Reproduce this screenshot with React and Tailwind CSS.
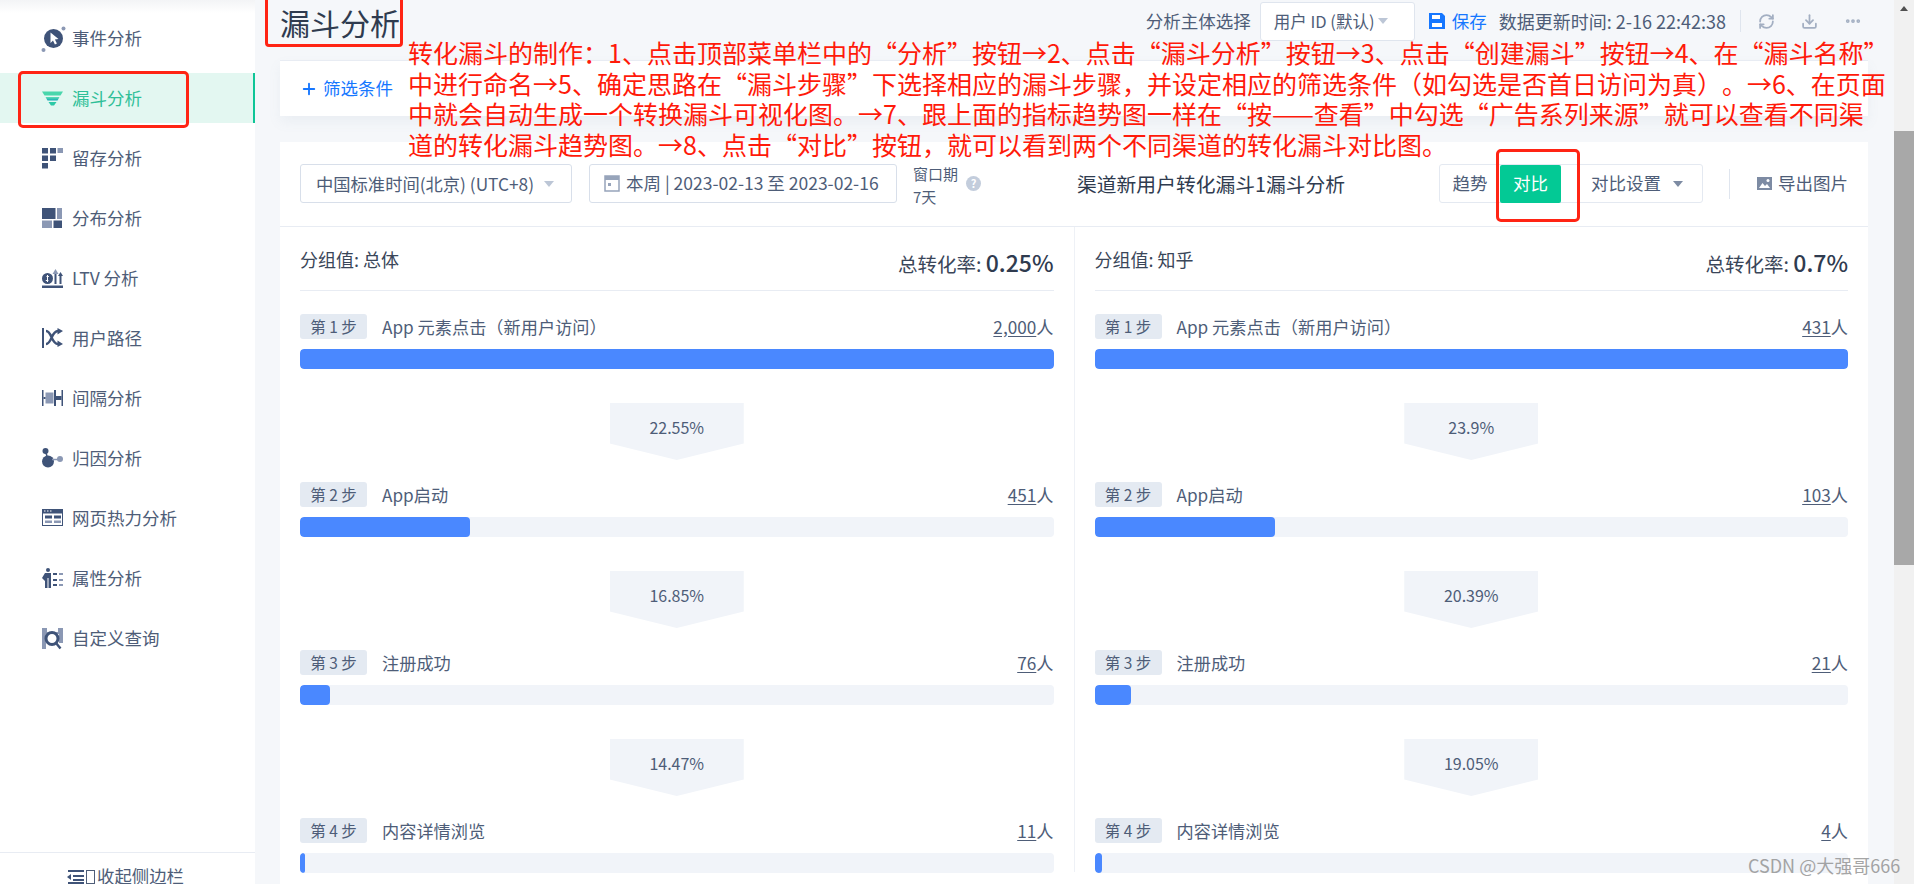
import { Plus, RefreshCw, Download, MoreHorizontal } from "lucide-react";

const DARK = "#3f5378";
const LIGHT = "#8b98b4";

// sidebar glyphs, all on a 21x21 box
const icons = {
  event: (
    <>
      <circle cx="11.500" cy="10.500" r="9.500" fill={DARK} />
      <path d="M8.500 4.500l8 6.500-3.600.6 2 4-2 .9-1.900-4-2.500 2.500z" fill="#fff" />
      <circle cx="21.500" cy="0.500" r="2" fill={LIGHT} />
      <circle cx="1.500" cy="22" r="2" fill={LIGHT} />
    </>
  ),
  funnel: (
    <>
      <defs>
        <linearGradient id="fn" x1="0" y1="0" x2="0" y2="1">
          <stop offset="0" stopColor="#5fe0b4" />
          <stop offset="1" stopColor="#14a8b4" />
        </linearGradient>
      </defs>
      <path d="M0 3.500h21l-2.500 4h-16z" fill="#49d6ac" />
      <path d="M3.500 9h14l-2 3.500h-10z" fill="url(#fn)" />
      <path d="M6.500 14h8l-2.500 3.500h-3z" fill="#2cc9a6" />
    </>
  ),
  retention: (
    <>
      <path d="M0 0h6v5.500H0zM8 0h6v5.500H8zM0 7.500h6V13H0zM8 7.500h6V13H8zM0 15h6v5.500H0z" fill={DARK} />
      <path d="M15.500 0h5.500v5h-5.500z" fill={LIGHT} />
    </>
  ),
  dist: (
    <>
      <path d="M0 0h13.500v11H0zM11.500 12.500H20V20h-8.500z" fill={DARK} />
      <path d="M15 0h5v11h-5zM0 12.500h10V20H0z" fill={LIGHT} />
    </>
  ),
  ltv: (
    <>
      <circle cx="5.500" cy="10.500" r="5.500" fill={DARK} />
      <path d="M5.500 7v7M3.800 12.500h2.600M4.500 8.500h2.400" stroke="#fff" strokeWidth="1" />
      <path d="M0 17.500h21V20H0z" fill={DARK} />
      <path d="M12.500 6h2v10h-2z" fill={DARK} />
      <path d="M17.500 8h2v8h-2z" fill={DARK} />
      <path d="M13.500 1l3 5h-6z" fill={LIGHT} />
      <path d="M18.500 4l2.500 4h-5z" fill={DARK} />
    </>
  ),
  path: (
    <>
      <path d="M0 0h2v20H0z" fill={DARK} />
      <path d="M4 3c6 0 5 13 12 13M4 16c6 0 5-13 12-13" stroke={DARK} strokeWidth="2.500" fill="none" />
      <path d="M15.500 0l5.500 3-5.500 3.500zM15.500 12.500l5.500 3.500-5.500 3z" fill={DARK} />
    </>
  ),
  interval: (
    <>
      <path d="M0 2h1.500v16H0zM19.500 2H21v16h-1.500zM12 2h2v16h-2z" fill={DARK} />
      <path d="M3.500 4.500h8v11h-8z" fill={LIGHT} />
      <path d="M1.500 9h2v2h-2zM14 8h5.500v4H14z" fill={DARK} />
    </>
  ),
  attr: (
    <>
      <circle cx="3.500" cy="3" r="3" fill={DARK} />
      <path d="M3.500 3l2.500 9" stroke={DARK} strokeWidth="1.500" />
      <circle cx="6" cy="13.500" r="6" fill={DARK} />
      <circle cx="18" cy="11" r="3" fill={LIGHT} />
      <path d="M10 11.500h6" stroke={LIGHT} strokeWidth="1.500" />
    </>
  ),
  heat: (
    <>
      <path d="M0 1h21v17H0z" fill={DARK} />
      <path d="M1 5.500h19V17H1z" fill="#fff" />
      <path d="M3 7.500h7v3H3zM12 7.500h7v3h-7z" fill={DARK} />
      <path d="M3 12.500h7v2.500H3zM12 12.500h7v2.500h-7z" fill={LIGHT} />
      <path d="M2 3h1.500M5 3h1.500M8 3h1.500" stroke="#fff" strokeWidth="1" />
    </>
  ),
  attrs: (
    <>
      <circle cx="6" cy="2" r="2" fill={DARK} />
      <path d="M0 10l3-5h6v15H3v-7z" fill={DARK} />
      <path d="M5.500 10h1v10h-1z" fill="#fff" />
      <path d="M11 5h4v2h-4zM11 11h4v2h-4zM11 16h4v2h-4z" fill={DARK} />
      <path d="M17 5h4v2h-4zM17 11h4v2h-4zM17 16h4v2h-4z" fill={LIGHT} />
    </>
  ),
  query: (
    <>
      <path d="M0 0h5v4h11V0h5v15h-4V6H4v15H0z" fill={LIGHT} />
      <circle cx="10" cy="10.500" r="6" fill="#fff" stroke={DARK} strokeWidth="3" />
      <path d="M14 15l4.500 5.500" stroke={DARK} strokeWidth="2.500" />
    </>
  ),
};

const navItems = [
  ["event", "事件分析"],
  ["funnel", "漏斗分析"],
  ["retention", "留存分析"],
  ["dist", "分布分析"],
  ["ltv", "LTV 分析"],
  ["path", "用户路径"],
  ["interval", "间隔分析"],
  ["attr", "归因分析"],
  ["heat", "网页热力分析"],
  ["attrs", "属性分析"],
  ["query", "自定义查询"],
];

const columns = [
  {
    group: "总体",
    rate: "0.25%",
    steps: [
      { name: "App 元素点击（新用户访问）", count: "2,000", width: "100%", filled: true },
      { name: "App启动", count: "451", width: "22.55%", pct: "22.55%" },
      { name: "注册成功", count: "76", width: "4%", pct: "16.85%" },
      { name: "内容详情浏览", count: "11", width: "0.6%", pct: "14.47%" },
    ],
  },
  {
    group: "知乎",
    rate: "0.7%",
    steps: [
      { name: "App 元素点击（新用户访问）", count: "431", width: "100%", filled: true },
      { name: "App启动", count: "103", width: "23.9%", pct: "23.9%" },
      { name: "注册成功", count: "21", width: "4.9%", pct: "20.39%" },
      { name: "内容详情浏览", count: "4", width: "1%", pct: "19.05%" },
    ],
  },
];

function Sidebar() {
  return (
    <aside className="w-[255px] h-[884px] shrink-0 bg-white flex flex-col relative">
      <div className="h-[13px] shrink-0 bg-gradient-to-b from-gray-100 to-white" />
      <nav className="flex flex-col">
        {navItems.map(([icon, label]) => {
          const active = icon === "funnel";
          return (
            <div
              key={icon}
              className={`h-[50px] mb-[10px] flex items-center pl-[42px] gap-[9px] text-[17.500px] ${
                active ? "bg-[#e3f7f1] text-[#2fbf98] border-r-2 border-[#0fc597]" : "text-[#4e5d78]"
              }`}
            >
              <svg width="21" height="21" viewBox="0 0 21 21" className="shrink-0 overflow-visible">
                {icons[icon]}
              </svg>
              <span>{label}</span>
            </div>
          );
        })}
      </nav>
      <div className="mt-auto h-[32px] border-t border-[#e8ecf3] flex items-center pl-[67px] pt-[16px] text-[17.400px] text-[#4e5d78]">
        <svg width="17" height="15" viewBox="0 0 17 15" className="shrink-0">
          <path d="M1 1h16v2H1zM6 6h11v2H6zM6 10h11v2H6zM1 13h16v2H1z" fill={DARK} />
          <path d="M0 8l4-3v6z" fill={DARK} />
        </svg>
        <span className="ml-[2px] mr-[2px] w-[9px] h-[14px] shrink-0 border border-[#4e5d78]" />
        <span>收起侧边栏</span>
      </div>
    </aside>
  );
}

function Header() {
  return (
    <div className="h-[60px] flex items-start justify-between pl-[25px] pr-[32px] text-[17.500px] text-[#4e5d78]">
      <h1 className="text-[30px] leading-[44px] text-[#2f3b4f] font-normal">漏斗分析</h1>
      <div className="flex items-center h-[42px] whitespace-nowrap">
        <span>分析主体选择</span>
        <div className="ml-[9px] w-[155px] h-[39px] bg-white border border-[#dfe5ee] rounded-[3px] flex items-center pl-[13px] gap-[3px]">
          <span className="text-[16.500px]">用户 ID (默认)</span>
          <span className="w-0 h-0 border-x-[5px] border-x-transparent border-t-[6px] border-t-[#bcc6d6]" />
        </div>
        <svg width="16" height="16" viewBox="0 0 16 16" className="ml-[14px]">
          <path d="M0 0h13l3 3v13H0z" fill="#1677ff" />
          <path d="M3 2h8v4H3zM3 10h10v4H3z" fill="#fff" />
        </svg>
        <span className="ml-[7px] text-[#1677ff]">保存</span>
        <span className="ml-[12px] text-[18px]">数据更新时间: 2-16 22:42:38</span>
        <div className="ml-[14px] w-px h-[22px] bg-[#dfe5ee]" />
        <RefreshCw size={17} strokeWidth={2.500} className="ml-[17px] text-[#a3afc2]" />
        <Download size={17} strokeWidth={2.500} className="ml-[26px] text-[#a3afc2]" />
        <MoreHorizontal size={18} strokeWidth={3} className="ml-[26px] text-[#a3afc2]" />
      </div>
    </div>
  );
}

function Step({ step }) {
  return (
    <>
      {step.pct && (
        <div className="h-[114px] flex justify-center pt-[35px]">
          {/* tab shape: rectangle with a downward point */}
          <div className="w-[134px] h-[57px] bg-[#f1f4f9] [clip-path:polygon(0_0,100%_0,100%_71%,50%_100%,0_71%)] flex justify-center pt-[12px] text-[16px] leading-[24px] text-[#4e5d78]">
            {step.pct}
          </div>
        </div>
      )}
      <div className="h-[25px] flex items-center text-[17.200px] text-[#4e5d78]">
        <span className="w-[67px] h-[25px] rounded-[3px] bg-[#e4eaf2] flex items-center justify-center text-[15.500px] whitespace-pre">
          第 {step.idx} 步
        </span>
        <span className="ml-[15px]">{step.name}</span>
        <span className="ml-auto">
          <span className="underline underline-offset-2">{step.count}</span>人
        </span>
      </div>
      <div className="mt-[10px] mb-[-1px] h-[20px] rounded-[4px] bg-[#f1f4f9] overflow-hidden">
        {/* width comes from the data */}
        <div className="h-full rounded-[4px] bg-[#4a88ff]" style={{ width: step.width }} />
      </div>
    </>
  );
}

function Column({ col, border }) {
  return (
    <div className={`flex-1 min-w-0 px-[20px] ${border ? "border-l border-[#eef1f6]" : ""}`}>
      <div className="h-[64px] flex justify-between border-b border-[#e8ecf3] text-[#3a4659]">
        <span className="text-[18px] leading-[24px] mt-[20px]">分组值: {col.group}</span>
        <span className="text-[19.500px] leading-[30px] mt-[20px]">
          总转化率: <span className="text-[23px] font-medium text-[#2f3b4f]">{col.rate}</span>
        </span>
      </div>
      <div className="pt-[23px]">
        {col.steps.map((s, i) => (
          <Step key={s.name} step={{ ...s, idx: i + 1 }} />
        ))}
      </div>
    </div>
  );
}

function Toolbar() {
  return (
    <div className="h-[85px] border-b border-[#e8ecf3] flex items-start pt-[22px] px-[20px] text-[17.500px] text-[#4e5d78] whitespace-nowrap">
      <div className="w-[272px] h-[39px] border border-[#d8dfea] rounded-[3px] flex items-center justify-between pl-[15px] pr-[17px]">
        <span className="text-[17.300px]">中国标准时间(北京) (UTC+8)</span>
        <span className="w-0 h-0 border-x-[5px] border-x-transparent border-t-[6px] border-t-[#bcc6d6]" />
      </div>
      <div className="ml-[17px] w-[308px] h-[39px] border border-[#d8dfea] rounded-[3px] flex items-center pl-[14px] gap-[6px]">
        <svg width="16" height="17" viewBox="0 0 16 17" className="shrink-0">
          <path d="M1 1h14v15H1z" fill="none" stroke="#97a4ba" strokeWidth="1.500" />
          <path d="M1 1h14v4H1zM4 8h3v3H4z" fill="#97a4ba" />
        </svg>
        <span>本周 | 2023-02-13 至 2023-02-16</span>
      </div>
      <div className="ml-[16px] mt-[-2px] text-[15px] leading-[23px]">
        <div>窗口期</div>
        <div>7天</div>
      </div>
      <div className="ml-[8px] mt-[12px] w-[15px] h-[15px] rounded-full bg-[#c3cddc] flex items-center justify-center text-white text-[11px] font-bold">
        ?
      </div>
      <div className="ml-[96px] mt-[6px] text-[19.800px] leading-[28px] text-[#2f3b4f]">渠道新用户转化漏斗1漏斗分析</div>
      <div className="ml-auto flex items-center">
        <div className="w-[264px] h-[39px] border border-[#e4e9f1] rounded-[3px] flex items-center">
          <span className="w-[60px] text-center">趋势</span>
          <span className="w-[61px] h-[38px] rounded-[2px] bg-[#03c995] text-white flex items-center justify-center">对比</span>
          <span className="ml-[30px]">对比设置</span>
          <span className="ml-[12px] w-0 h-0 border-x-[5px] border-x-transparent border-t-[6px] border-t-[#7d8ba3]" />
        </div>
        <div className="ml-[26px] w-px h-[30px] bg-[#dfe5ee]" />
        <svg width="15" height="15" viewBox="0 0 15 15" className="ml-[27px] shrink-0">
          <path d="M0 1h15v13H0z" fill="#7d8ba3" />
          <path d="M2 12l3.500-5 2.500 3 2-2 3 4z" fill="#fff" />
          <circle cx="11" cy="4.500" r="1.500" fill="#fff" />
        </svg>
        <span className="ml-[6px]">导出图片</span>
      </div>
    </div>
  );
}

export default function App() {
  return (
    <div className="w-[1914px] h-[884px] overflow-hidden relative flex bg-[#f5f7fa] font-['Noto_Sans_CJK_SC','Noto_Sans',sans-serif]">
      <Sidebar />
      <main className="w-[1639px] shrink-0">
        <Header />
        <div className="ml-[25px] w-[1588px] h-[56px] bg-white border-t border-[#e8ecf3] shadow-[0_6px_12px_rgba(120,140,170,0.08)] flex items-center pl-[20px] text-[17.500px] text-[#1677ff]">
          <Plus size={18} strokeWidth={2.500} />
          <span className="ml-[5px]">筛选条件</span>
        </div>
        <div className="ml-[25px] mt-[26px] w-[1588px] h-[742px] bg-white">
          <Toolbar />
          <div className="flex">
            {columns.map((col, i) => (
              <Column key={col.group} col={col} border={i > 0} />
            ))}
          </div>
        </div>
      </main>
      <div className="w-[20px] shrink-0 bg-[#f1f1f1] flex flex-col">
        <div className="h-[17px] flex items-center justify-center">
          <span className="w-0 h-0 border-x-[4px] border-x-transparent border-b-[5px] border-b-[#505050]" />
        </div>
        <div className="mt-[114px] h-[434px] bg-[#a8a8a8]" />
      </div>

      {/* annotations pasted on top of the screenshot */}
      <div className="absolute left-[408px] top-[37px] text-[25px] leading-[30.500px] text-[#ff1a0a] whitespace-nowrap [text-spacing-trim:space-all]">
        <div>转化漏斗的制作：1、点击顶部菜单栏中的“分析”按钮→2、点击“漏斗分析”按钮→3、点击“创建漏斗”按钮→4、在“漏斗名称”</div>
        <div>中进行命名→5、确定思路在“漏斗步骤”下选择相应的漏斗步骤，并设定相应的筛选条件（如勾选是否首日访问为真）。→6、在页面</div>
        <div>中就会自动生成一个转换漏斗可视化图。→7、跟上面的指标趋势图一样在“按——查看”中勾选“广告系列来源”就可以查看不同渠</div>
        <div>道的转化漏斗趋势图。→8、点击“对比”按钮，就可以看到两个不同渠道的转化漏斗对比图。</div>
      </div>
      <div className="absolute left-[265px] top-[-4px] w-[138px] h-[51px] border-[3px] border-[#ff2414] rounded-[4px]" />
      <div className="absolute left-[18px] top-[71px] w-[171px] h-[57px] border-[3px] border-[#ff2414] rounded-[5px]" />
      <div className="absolute left-[1496px] top-[149px] w-[84px] h-[73px] border-[3px] border-[#ff2414] rounded-[5px]" />
      <div className="absolute left-[1748px] top-[852px] text-[18px] text-[#8f8f8f] opacity-80">CSDN @大强哥666</div>
    </div>
  );
}
